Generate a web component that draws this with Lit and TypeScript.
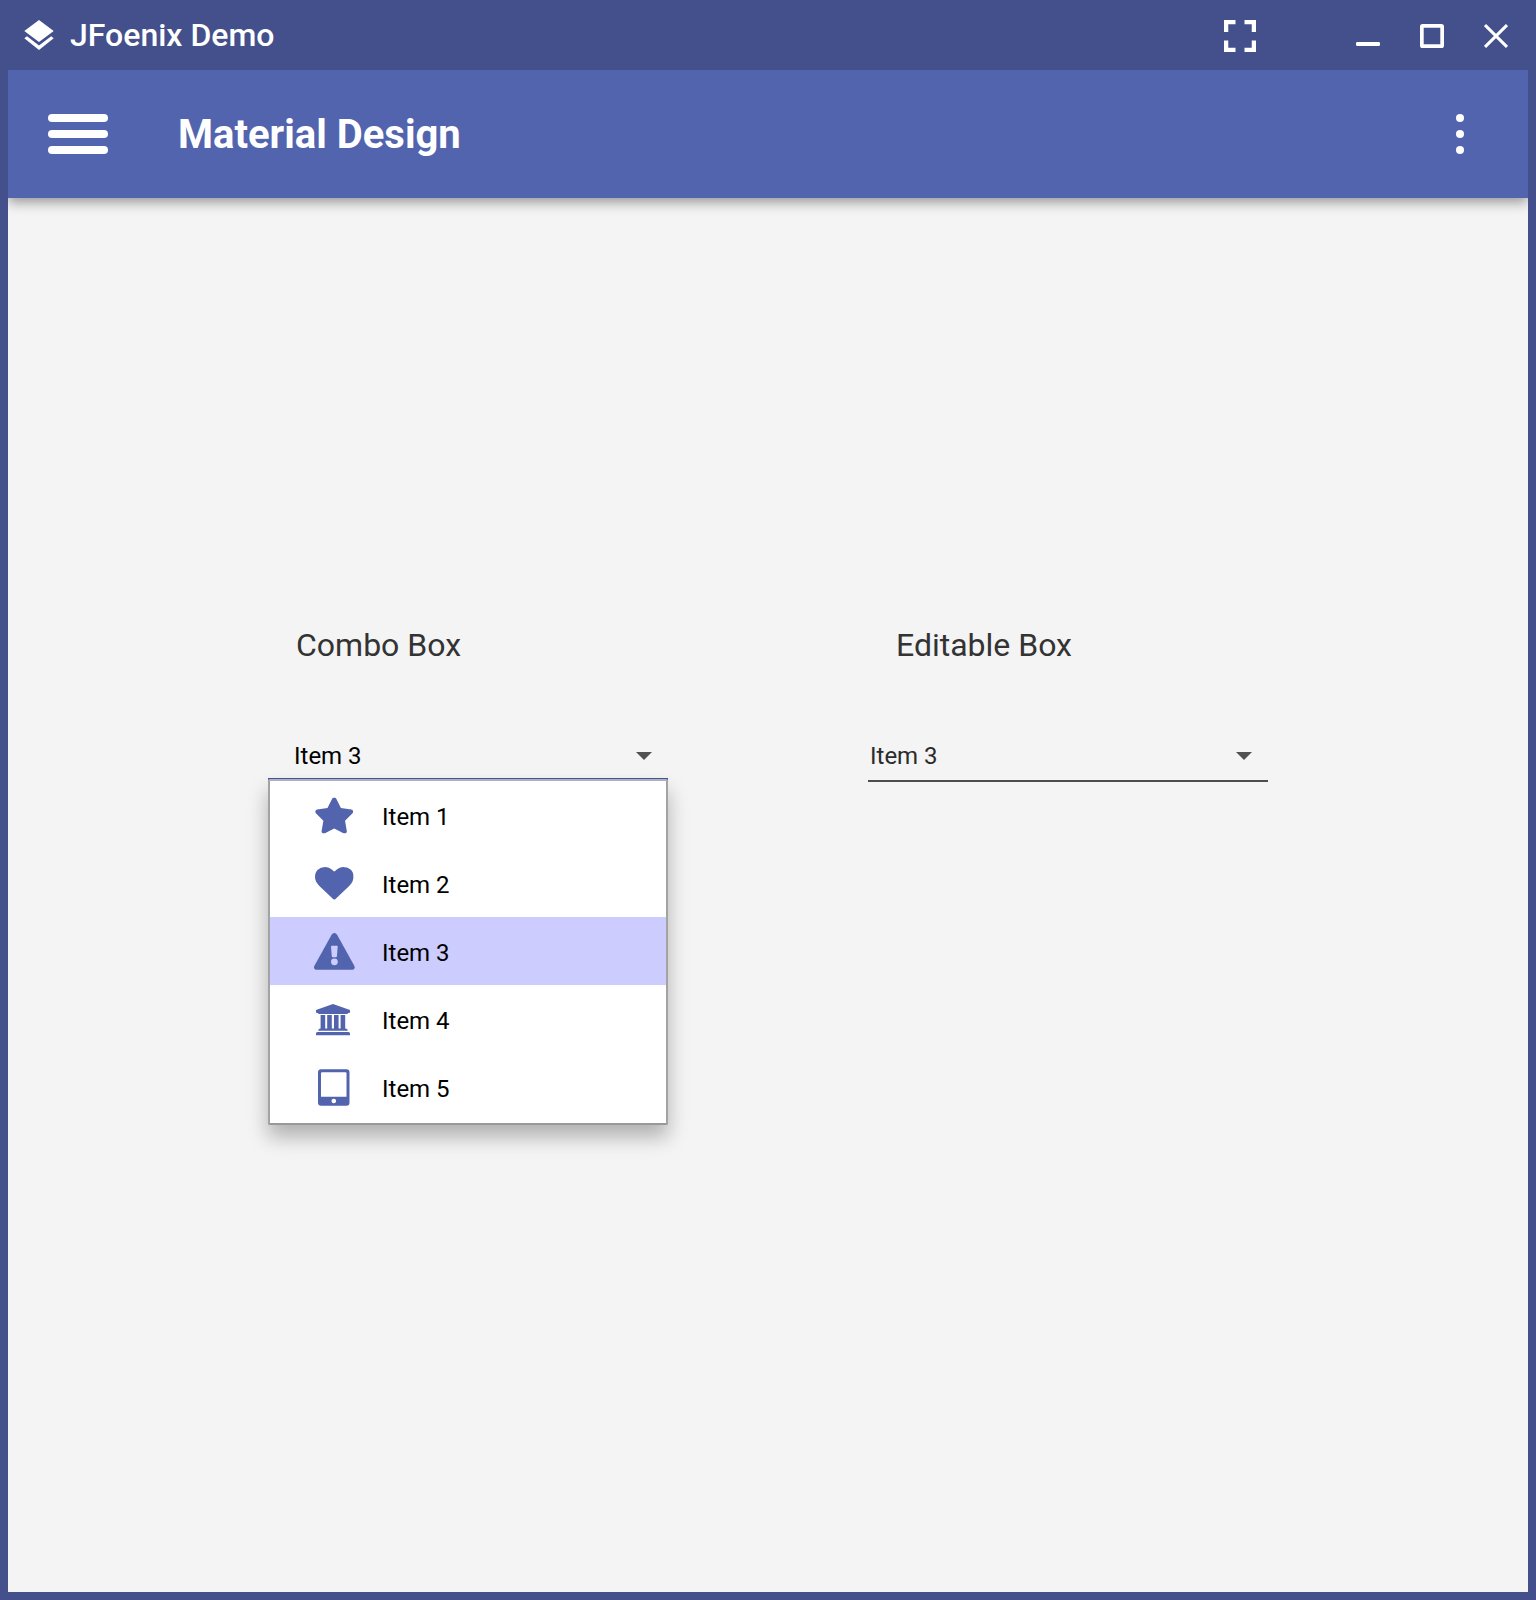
import { LitElement, html, css, svg } from "lit";
import { customElement, property } from "lit/decorators.js";
import { classMap } from "lit/directives/class-map.js";

const icons = {
  star: svg`<svg x="11.200" y="16.400" width="38" height="36.200" viewBox="24 0 528 512" preserveAspectRatio="none"><path d="M316.900 18C311.600 7 300.400 0 288.100 0s-23.400 7-28.800 18L195 150.300 51.400 171.500c-12 1.800-22 10.200-25.700 21.700s-.7 24.200 7.900 32.700L137.800 329 113.200 474.700c-2 12 3 24.200 12.900 31.300s23 8 33.800 2.300l128.300-68.500 128.300 68.500c10.800 5.700 23.900 4.900 33.800-2.300s14.900-19.300 12.900-31.300L438.500 329 542.700 225.900c8.600-8.500 11.700-21.200 7.900-32.700s-13.700-19.900-25.700-21.700L381.200 150.300 316.900 18z"/></svg>`,
  heart: svg`<svg x="11" y="18" width="38.600" height="32.700" viewBox="0 128 1792 1536" preserveAspectRatio="none"><path d="M896 1664q-26 0-44-18l-624-602q-10-8-27.500-26T145 952.500 77 855 23.500 734 0 596q0-220 127-344t351-124q62 0 126.500 21.500t120 58T820 276t76 68q36-36 76-68t95.500-68.500 120-58T1314 128q224 0 351 124t127 344q0 221-229 450l-623 600q-18 18-44 18z"/></svg>`,
  warning: svg`<path d="M27.600 17.800Q28.600 16 30.350 16T33.100 17.800L50.400 49C51.400 50.900 50.300 52.700 48.300 52.700H12.400C10.400 52.700 9.300 50.900 10.300 49Z"/><path class="cut" d="M27 29.500Q27 28.700 27.800 28.700H32.900Q33.700 28.700 33.700 29.500L32.900 39.300Q32.800 40.200 31.900 40.200H28.800Q27.900 40.200 27.800 39.300Z"/><circle class="cut" cx="30.400" cy="44.800" r="3.400"/>`,
  bank: svg`<path d="M29 19L46 25.100V27Q46 27.900 45 27.900H43.700V29H14.300V27.900H13Q12 27.900 12 27V25.100ZM16.600 29.900H21.200V43.600H23.200V29.900H27.800V43.600H30V29.900H34.600V43.600H36.600V29.900H41.200V43.600Q43.800 43.600 43.800 45.700H14.200Q14.200 43.600 16.600 43.600ZM13.500 47H44.500Q46 47 46 48.500V50.300H12V48.500Q12 47 13.500 47Z"/>`,
  tablet: svg`<path fill-rule="evenodd" d="M17 16.300H42.500Q45.500 16.300 45.500 19.500V49.500Q45.500 52.700 42.500 52.700H17Q14 52.700 14 49.500V19.500Q14 16.300 17 16.300ZM18 19.300Q17 19.300 17 20.300V43.700H42.500V20.300Q42.500 19.300 41.500 19.300ZM29.800 45.700a2.300 2.300 0 1 0 .01 0Z"/>`,
};

type IconName = keyof typeof icons;

@customElement("window-bar")
class WindowBar extends LitElement {
  static styles = css`
    :host { display: flex; align-items: center; box-sizing: border-box; height: 70px; padding: 0 28px 0 20px; color: #fff; }
    .logo { flex: none; margin-right: 11px; }
    .title { flex: 1; font: 500 32px/38px Roboto, sans-serif; }
    .full { margin-right: 100px; }
    .min, .max { margin-right: 40px; }
    svg { display: block; }
  `;
  render() {
    return html`
      <svg class="logo" width="39" height="70" viewBox="0 0 39 70" fill="#fff">
        <path d="M19 20L33.700 31.100 19 42 4.300 31.100ZM4.300 38.200L7 36.300 19 45.500 31.200 36.300 33.700 38.200 19 50Z" />
      </svg>
      <div class="title">JFoenix Demo</div>
      <svg class="full" width="32" height="72" viewBox="0 0 32 72" fill="none" stroke="#fff" stroke-width="4.300">
        <path d="M2.100 33V23.100H11.500M20.500 23.100H29.900V33M29.900 41.500V50.900H20.500M11.500 50.900H2.100V41.500" />
      </svg>
      <svg class="min" width="24" height="70" viewBox="0 0 24 70" fill="#fff"><rect y="42" width="24" height="4" rx="1.200" /></svg>
      <svg class="max" width="24" height="70" viewBox="0 0 24 70" fill="none" stroke="#fff" stroke-width="3.700">
        <rect x="1.850" y="25.850" width="20.300" height="20.300" rx=".7" />
      </svg>
      <svg width="24" height="70" viewBox="0 0 24 70" fill="none" stroke="#fff" stroke-width="3.100"><path d="M1 25L23 47M23 25L1 47" /></svg>
    `;
  }
}

@customElement("tool-bar")
class ToolBar extends LitElement {
  static styles = css`
    :host {
      display: flex; align-items: center; box-sizing: border-box; height: 128px; padding: 0 64px 0 40px;
      background: #5264ae; color: #fff;
    }
    .menu { display: grid; gap: 8px; width: 60px; margin: 0 70px 0 0; }
    .line { height: 8px; border-radius: 4px; background: #fff; }
    .title { flex: 1; padding-top: 2px; font: 700 40px/48px Roboto, sans-serif; }
    .more { display: grid; gap: 8px; }
    .dot { width: 8px; height: 8px; border-radius: 50%; background: #fff; }
  `;
  render() {
    return html`
      <div class="menu">${[0, 1, 2].map(() => html`<div class="line"></div>`)}</div>
      <div class="title">Material Design</div>
      <div class="more">${[0, 1, 2].map(() => html`<div class="dot"></div>`)}</div>
    `;
  }
}

@customElement("item-list")
class ItemList extends LitElement {
  @property({ type: Number }) selected = 3;
  static styles = css`
    :host {
      display: block; box-sizing: border-box; padding-bottom: 2px; background: #fff; border: 2px solid #a3a3a3;
      border-top-color: #b2b2b2; border-bottom-color: #999; border-radius: 2px;
      box-shadow: 0 12px 20px rgba(0, 0, 0, 0.28);
    }
    .row { display: flex; align-items: center; height: 68px; padding-left: 34px; color: #000; font: 400 24px/28px Roboto, sans-serif; }
    .row.selected { background: #ccf; }
    .icon { display: block; width: 60px; height: 68px; margin-right: 18px; fill: #5264ae; }
    .cut { fill: #ccf; }
    .label { padding-top: 3px; }
  `;
  render() {
    const names: IconName[] = ["star", "heart", "warning", "bank", "tablet"];
    return names.map(
      (name, i) => html`<div class=${classMap({ row: true, selected: i + 1 === this.selected })}>
        <svg class="icon" viewBox="0 0 60 68">${icons[name]}</svg>
        <span class="label">Item ${i + 1}</span>
      </div>`,
    );
  }
}

@customElement("combo-field")
class ComboField extends LitElement {
  @property() caption = "";
  @property({ type: Boolean, reflect: true }) open = false;
  static styles = css`
    :host { display: block; position: relative; width: 400px; color: #2b2b2b; font-family: Roboto, sans-serif; }
    .caption { padding-left: 28px; color: #333; font-size: 32px; line-height: 38px; font-weight: 400; }
    .field {
      display: flex; align-items: center; box-sizing: border-box; height: 52px; margin-top: 66px;
      padding: 2px 16px 0 2px; border-bottom: 2px solid #4d4d4d; font-size: 24px; line-height: 28px;
    }
    .value { flex: 1; }
    .arrow { display: block; fill: #505050; }
    :host([open]) .field { height: 50px; padding-left: 26px; padding-top: 4px; border-color: #3f55b0; color: #000; }
    .popup { position: absolute; left: 0; top: 153px; width: 400px; }
  `;
  render() {
    return html`
      <div class="caption">${this.caption}</div>
      <div class="field">
        <span class="value">Item 3</span>
        <svg class="arrow" width="16" height="8" viewBox="0 0 16 8"><path d="M0 0H16L8 8Z" /></svg>
      </div>
      ${this.open ? html`<item-list class="popup"></item-list>` : ""}
    `;
  }
}

@customElement("app-root")
class AppRoot extends LitElement {
  static styles = css`
    :host { display: flex; flex-direction: column; box-sizing: border-box; height: 1600px; background: #43508b; }
    .frame { flex: 1; display: flex; flex-direction: column; margin: 0 8px 8px; background: #f4f4f4; overflow: hidden; }
    .bar { flex: none; box-shadow: 0 4px 12px rgba(0, 0, 0, 0.4); }
    .content { display: flex; justify-content: center; align-items: flex-start; gap: 200px; padding-top: 428px; }
  `;
  render() {
    return html`
      <window-bar></window-bar>
      <div class="frame">
        <tool-bar class="bar"></tool-bar>
        <main class="content">
          <combo-field caption="Combo Box" open></combo-field>
          <combo-field caption="Editable Box"></combo-field>
        </main>
      </div>
    `;
  }
}
